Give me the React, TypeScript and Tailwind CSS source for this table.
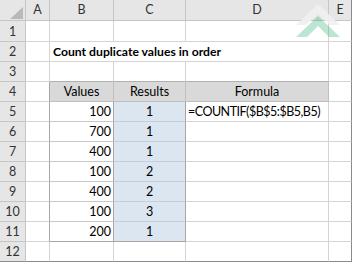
import React from "react";

const COLS = ["A", "B", "C", "D", "E"];
const VALUES = [100, 700, 400, 100, 400, 100, 200];
const RESULTS = [1, 1, 1, 2, 2, 3, 1];

// border + fill for a worksheet cell at row r, column c (1 = A .. 5 = E)
function cellClass(r: number, c: number) {
  const inTable = r >= 4 && r <= 11 && c >= 2 && c <= 4;
  let right = "border-r-[#d4d4d4]";
  if (c === 5) right = "border-r-[#8a8a8a]";
  else if (c === 1 && r >= 4 && r <= 11) right = "border-r-[#a6a6a6]";
  else if ((c === 2 || c === 3) && r >= 5 && r <= 11) right = "border-r-[#a6a6a6]";
  else if (r === 4 && inTable) right = "border-r-[#bfbfbf]";

  let bottom = "border-b-[#d4d4d4]";
  if (r === 12) bottom = "border-b-[#8a8a8a]";
  else if (r === 3 && c >= 2 && c <= 4) bottom = "border-b-[#b0b0b0]";
  else if (r === 4 && inTable) bottom = "border-b-[#bfbfbf]";
  else if (r === 11 && (c === 2 || c === 3)) bottom = "border-b-[#a6a6a6]";
  else if (r >= 5 && r <= 10 && c === 2) bottom = "border-b-[#c8c8c8]";
  else if (r >= 5 && r <= 10 && c === 3) bottom = "border-b-[#c3cfdd]";

  let bg = "bg-white";
  if (r === 4 && inTable) bg = "bg-[#d9d9d9]";
  else if (c === 3 && r >= 5 && r <= 11) bg = "bg-[#dce6f1]";

  return `${right} ${bottom} ${bg}`;
}

function cellContent(r: number, c: number) {
  if (r === 4) {
    if (c === 2) return { text: "Values", align: "justify-center" };
    if (c === 3) return { text: "Results", align: "justify-center" };
    if (c === 4) return { text: "Formula", align: "justify-center" };
  }
  if (r >= 5 && r <= 11) {
    if (c === 2) return { text: String(VALUES[r - 5]), align: "justify-end pr-[2px]" };
    if (c === 3) return { text: String(RESULTS[r - 5]), align: "justify-center" };
    if (c === 4 && r === 5)
      return { text: "=COUNTIF($B$5:$B5,B5)", align: "justify-start pl-[2px] tracking-[-0.5px]" };
  }
  return { text: "", align: "justify-start" };
}

export default function App() {
  const rows = Array.from({ length: 12 }, (_, i) => i + 1);

  return (
    <div className="relative w-[352px] h-[262px] overflow-hidden bg-white font-['Lato','Carlito','Liberation_Sans',sans-serif] text-[12.5px] leading-none text-black">
      <div className="grid grid-cols-[26px_24px_64px_72px_143px_23px] grid-rows-[21px_21px_repeat(11,20px)]">
        {/* Corner */}
        <div className="relative border-r border-b border-r-[#c6c6c6] border-b-[#c6c6c6] bg-[#e6e6e6]">
          <svg className="absolute left-[10px] top-[7px]" width="13" height="12" viewBox="0 0 13 12">
            <polygon points="13,0 13,12 0,12" fill="#b9b9b9" />
          </svg>
        </div>
        {/* Column headers */}
        {COLS.map((col, i) => (
          <div
            key={col}
            className={`flex items-center justify-center pt-[1px] border-r border-b border-b-[#c6c6c6] bg-[#e6e6e6] text-[#333] ${
              i === 4 ? "border-r-[#8a8a8a]" : "border-r-[#c6c6c6]"
            }`}
          >
            {col}
          </div>
        ))}

        {rows.map((r) => (
          <React.Fragment key={r}>
            {/* Row header */}
            <div
              className={`flex items-center justify-center pt-[2px] border-r border-b border-r-[#c6c6c6] bg-[#e6e6e6] text-[#333] ${
                r === 12 ? "border-b-[#8a8a8a]" : "border-b-[#c6c6c6]"
              }`}
            >
              {r}
            </div>
            {r === 2 ? (
              <>
                <div className={`border-r border-b ${cellClass(2, 1)}`} />
                <div className="col-span-3 flex items-center pt-[2px] pl-[3px] border-r border-b border-r-[#d4d4d4] border-b-[#d4d4d4] bg-white text-[12.2px] font-bold whitespace-nowrap">
                  Count duplicate values in order
                </div>
                <div className={`border-r border-b ${cellClass(2, 5)}`} />
              </>
            ) : (
              [1, 2, 3, 4, 5].map((c) => {
                const { text, align } = cellContent(r, c);
                return (
                  <div
                    key={c}
                    className={`flex items-center pt-[2px] whitespace-nowrap border-r border-b ${align} ${cellClass(r, c)}`}
                  >
                    {text}
                  </div>
                );
              })
            )}
          </React.Fragment>
        ))}
      </div>

      {/* Watermark */}
      <svg
        className="pointer-events-none absolute left-[290px] top-0"
        width="60"
        height="40"
        viewBox="290 0 60 40"
      >
        <polygon
          points="318,4 340,25 330,25 318,14 306,25 296,25"
          fill="#f0f0f0"
          opacity="0.9"
        />
        <polygon
          points="318,16 340,37 329,37 318,26 307,37 296,37"
          fill="#3fb57f"
          opacity="0.35"
        />
      </svg>
    </div>
  );
}
